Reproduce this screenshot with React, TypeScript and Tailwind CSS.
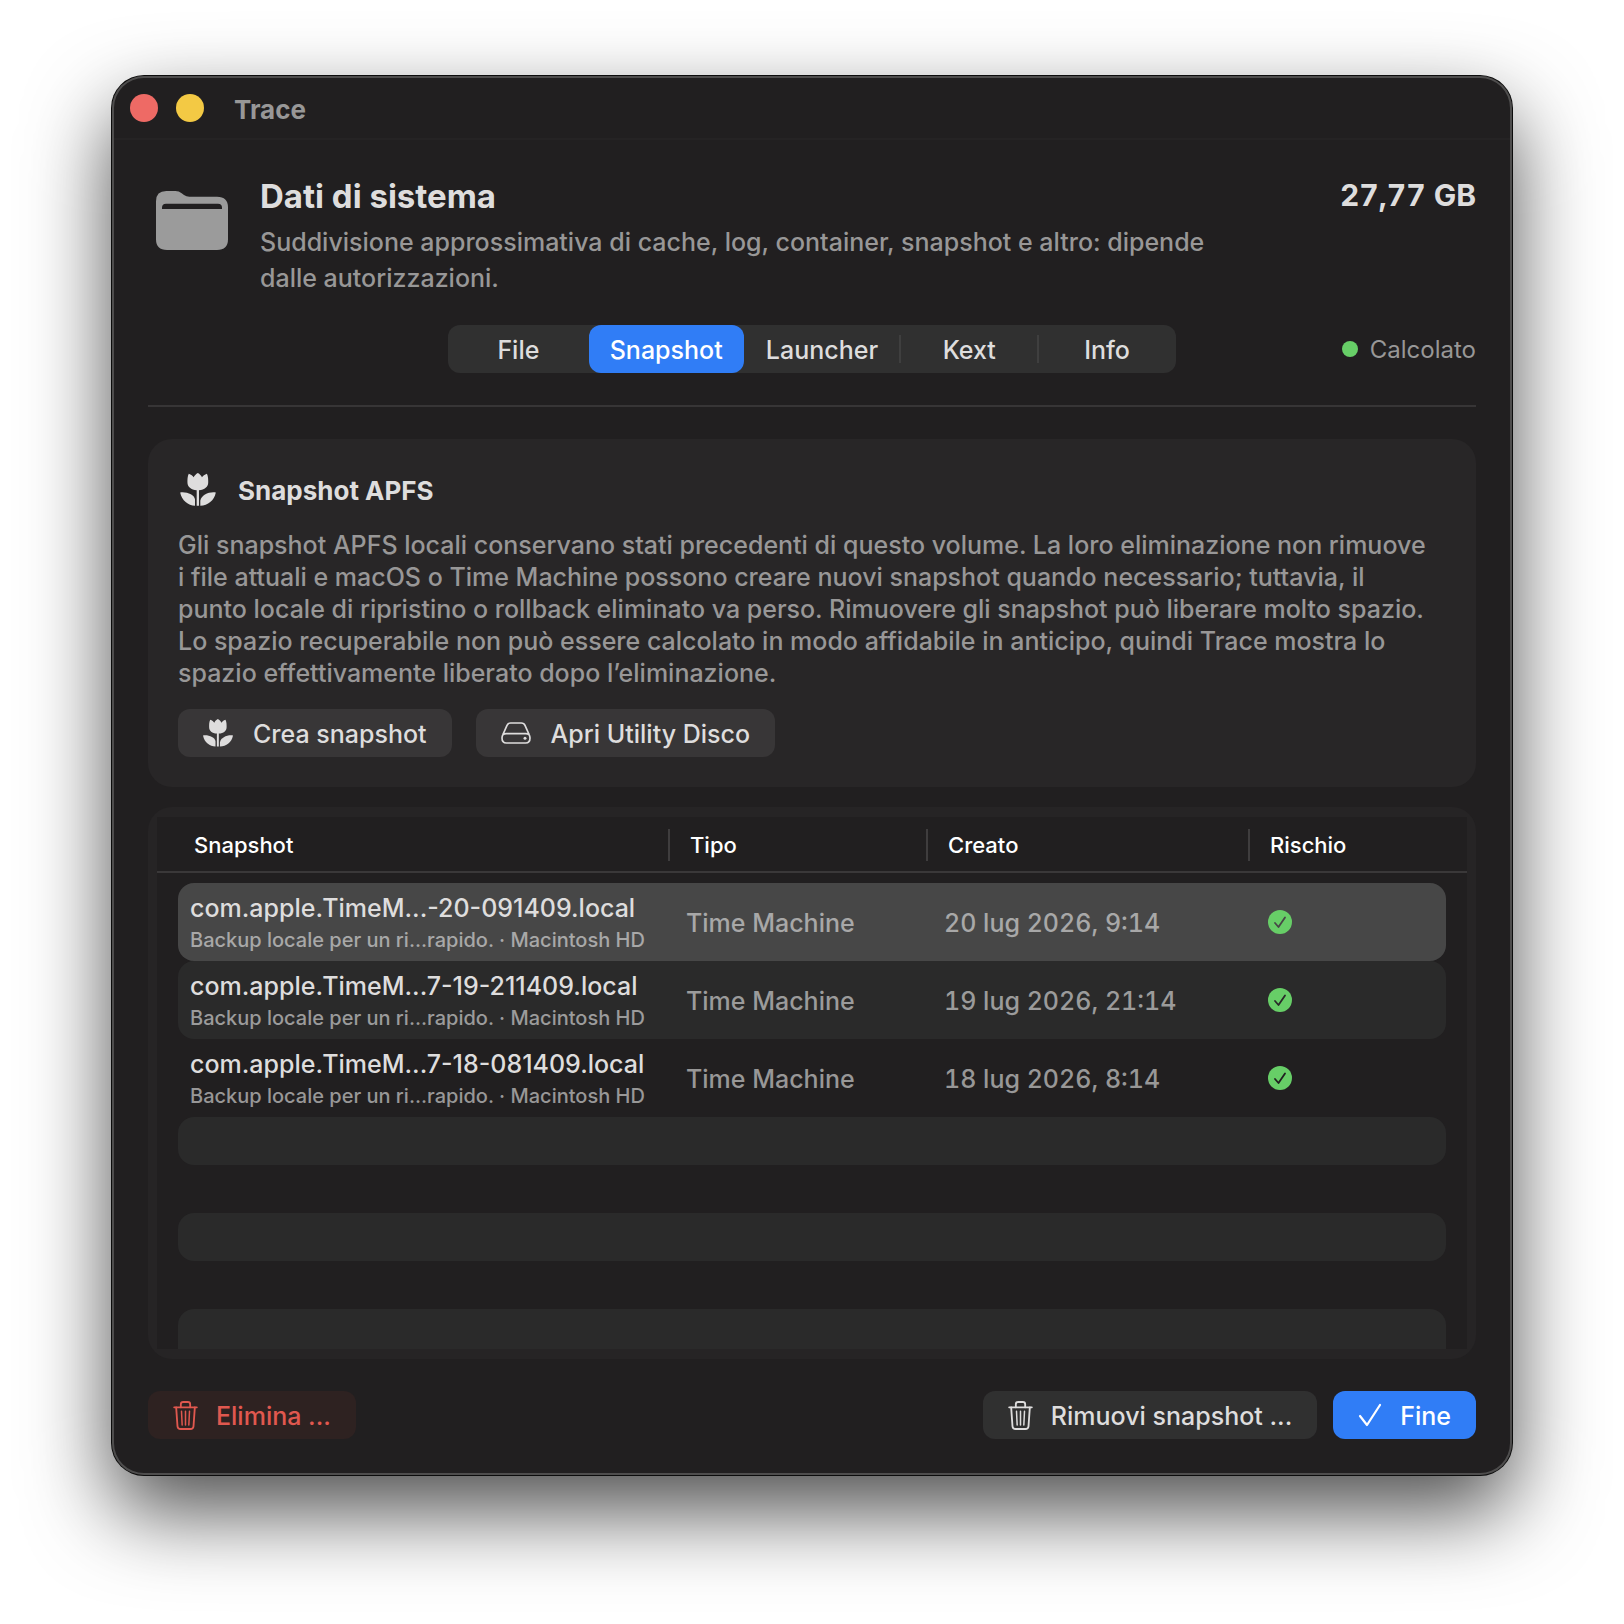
import type { ReactNode } from "react";

const tabs = [
  { label: "File", className: "flex-[141]" },
  { label: "Snapshot", className: "flex-[155]" },
  { label: "Launcher", className: "flex-[157]" },
  { label: "Kext", className: "flex-[138]" },
  { label: "Info", className: "flex-[138]" },
];

const snapshots = [
  { name: "com.apple.TimeM...-20-091409.local", created: "20 lug 2026, 9:14" },
  { name: "com.apple.TimeM...7-19-211409.local", created: "19 lug 2026, 21:14" },
  { name: "com.apple.TimeM...7-18-081409.local", created: "18 lug 2026, 8:14" },
];

// The tick inside the green badge takes the row's background colour
const rowStyles = [
  { row: "bg-[#474747]", muted: "text-[#a8a8a8]", tick: "text-[#474747]" },
  { row: "bg-[#2a2a2a]", muted: "text-[#9b9b9b]", tick: "text-[#2a2a2a]" },
  { row: "", muted: "text-[#989797]", tick: "text-[#211f20]" },
];

function FolderIcon() {
  return (
    <svg viewBox="0 0 216 177" className="h-[59px] w-[72px]" fill="#9b9b9b" aria-hidden="true">
      <path
        fillRule="evenodd"
        d="M0 31Q0 0 31 0H58Q69 0 77 7L84 12Q91 17 100 17H183Q216 17 216 49V145Q216 177 183 177H33Q0 177 0 145ZM18 54H198V50Q198 38 186 38H30Q18 38 18 50Z"
      />
    </svg>
  );
}

function TulipIcon({ className }: { className: string }) {
  return (
    <svg viewBox="0 0 108 100" className={className} fill="currentColor" aria-hidden="true">
      <path d="M26 2C33 4 38 9 41 13C43 8 48 3 53.500 0C59 3 64 8 66 13C69 9 74 4 81 2C85 10 85 20 85 28C85 42 74 51 57 52V99H50V52C33 51 22 42 22 28C22 20 22 10 26 2Z" />
      <path d="M0 59C20 56 43 66 45 80V99C24 98 5 84 0 59Z" />
      <path d="M108 59C88 56 64 66 61 84V99C84 98 103 84 108 59Z" />
    </svg>
  );
}

function DriveIcon() {
  return (
    <svg viewBox="0 0 90 66" className="h-[22px] w-[30px]" fill="none" stroke="currentColor" strokeWidth="5" aria-hidden="true">
      <path d="M29 3H61Q69 3 72 10L84 37Q87 43 87 48Q87 63 74 63H16Q3 63 3 48Q3 43 6 37L18 10Q21 3 29 3Z" />
      <path d="M6 38Q10 35 16 35H74Q80 35 84 38" />
      <circle cx="72" cy="49" r="4.500" fill="currentColor" stroke="none" />
    </svg>
  );
}

function TrashIcon() {
  return (
    <svg viewBox="0 0 74 87" className="h-[29px] w-[25px]" fill="none" stroke="currentColor" strokeWidth="5.500" strokeLinecap="round" aria-hidden="true">
      <path d="M3 19H71" />
      <path d="M23 19V10Q23 3 30 3H44Q51 3 51 10V19" />
      <path d="M9 19L13 76Q14 84 22 84H52Q60 84 61 76L65 19" />
      <path strokeWidth="4.500" d="M25 31L27 72M37 31V72M49 31L47 72" />
    </svg>
  );
}

function CheckIcon() {
  return (
    <svg viewBox="0 0 24 24" className="size-6" fill="none" stroke="currentColor" strokeWidth="2.200" strokeLinecap="round" strokeLinejoin="round" aria-hidden="true">
      <path d="M2 13L9 22L22 2" />
    </svg>
  );
}

function SafeIcon() {
  return (
    <svg viewBox="0 0 24 24" className="size-6" role="img" aria-label="Sicuro">
      <circle cx="12" cy="12" r="12" fill="#67ce67" />
      <path d="M7 13L10.500 17L17 7.500" fill="none" stroke="currentColor" strokeWidth="1.800" strokeLinecap="round" strokeLinejoin="round" />
    </svg>
  );
}

function ActionButton({ icon, className, children }: { icon: ReactNode; className: string; children: ReactNode }) {
  return (
    <button
      type="button"
      className={`flex h-12 items-center rounded-xl px-[25px] whitespace-nowrap ${className}`}
    >
      {icon}
      <span className="pt-[3px]">{children}</span>
    </button>
  );
}

export default function App() {
  return (
    <div className="min-h-screen bg-white px-28 pt-[76px] pb-[148px] font-['Inter','Liberation_Sans',sans-serif] text-[25px] font-medium text-[#dedddd]">
      <main className="rounded-[32px] bg-[#211f20] shadow-[inset_0_0_0_2px_#4e4d4d,0_0_0_1px_#0c0c0c,0_36px_84px_rgba(0,0,0,0.7)]">
        {/* Title bar */}
        <div className="mx-0.5 flex h-16 items-center border-b-2 border-[#252324] pt-0.5 pl-4">
          <button type="button" aria-label="Chiudi" className="size-7 rounded-full bg-[#ee6a65]" />
          <button type="button" aria-label="Riduci" className="ml-[18px] size-7 rounded-full bg-[#f3c944]" />
          <h1 className="ml-[30px] pt-0.5 text-[26px] font-bold text-[#989797]">Trace</h1>
        </div>

        <div className="px-9 pt-[34px] pb-9">
          {/* Header */}
          <header className="flex items-start">
            <div className="mt-[17px] ml-2 shrink-0">
              <FolderIcon />
            </div>
            <div className="ml-8 max-w-[980px] flex-1">
              <h2 className="text-[33px] leading-11 font-bold">Dati di sistema</h2>
              <p className="mt-1.5 leading-9 text-[#989797]">
                Suddivisione approssimativa di cache, log, container, snapshot e altro: dipende dalle autorizzazioni.
              </p>
            </div>
            <p className="ml-auto text-[30px] leading-[42px] font-bold whitespace-nowrap tabular-nums">27,77 GB</p>
          </header>

          {/* Tabs */}
          <div className="mt-[29px] grid grid-cols-[1fr_728px_1fr] items-center">
            <div role="tablist" className="col-start-2 flex h-12 items-center rounded-xl bg-[#303030]">
              {tabs.map((tab, i) => (
                <button
                  key={tab.label}
                  type="button"
                  role="tab"
                  aria-selected={i === 1}
                  className={`relative h-12 pt-[3px] ${tab.className} ${i === 1 ? "rounded-xl bg-[#307df6] text-white" : ""}`}
                >
                  {tab.label}
                  {(i === 2 || i === 3) && <span className="absolute top-2.5 -right-px h-7 w-0.5 bg-[#3f3f3f]" />}
                </button>
              ))}
            </div>
            <p className="flex items-center justify-end gap-3 text-[24px] font-normal text-[#989797]">
              <span className="size-4 rounded-full bg-[#67ce67]" />
              <span className="pt-0.5">Calcolato</span>
            </p>
          </div>

          <hr className="mt-8 border-t-2 border-[#373536]" />

          {/* Snapshot info */}
          <section className="mt-8 rounded-3xl bg-[#282627] p-[30px]">
            <div className="flex h-10 items-center">
              <TulipIcon className="ml-0.5 h-[33px] w-9" />
              <h3 className="ml-[22px] pt-0.5 text-[26px] font-bold">Snapshot APFS</h3>
            </div>
            <p className="mt-5 pr-3 leading-8 text-[#989797]">
              Gli snapshot APFS locali conservano stati precedenti di questo volume. La loro eliminazione non rimuove
              i file attuali e macOS o Time Machine possono creare nuovi snapshot quando necessario; tuttavia, il
              punto locale di ripristino o rollback eliminato va perso. Rimuovere gli snapshot può liberare molto spazio.
              Lo spazio recuperabile non può essere calcolato in modo affidabile in anticipo, quindi Trace mostra lo
              spazio effettivamente liberato dopo l’eliminazione.
            </p>
            <div className="mt-5 flex gap-6">
              <ActionButton icon={<TulipIcon className="h-7 w-[30px]" />} className="gap-5 bg-[#383637]">
                Crea snapshot
              </ActionButton>
              <ActionButton icon={<DriveIcon />} className="gap-5 bg-[#383637]">
                Apri Utility Disco
              </ActionButton>
            </div>
          </section>

          {/* Snapshot list */}
          <section className="mt-5 overflow-hidden rounded-3xl bg-[#262425] px-[9px] py-2.5">
            <div className="bg-[#211f20]">
              <table className="block">
                <thead className="block border-b-2 border-[#3a3839] px-[21px] text-[22px] text-white">
                  <tr className="grid h-[54px] grid-cols-[490fr_258fr_322fr_198fr] items-center pt-0.5 text-left">
                    <th className="pl-4 leading-8 font-medium">Snapshot</th>
                    <th className="border-l-2 border-[#3f3d3e] pl-5 leading-8 font-medium">Tipo</th>
                    <th className="border-l-2 border-[#3f3d3e] pl-5 leading-8 font-medium">Creato</th>
                    <th className="border-l-2 border-[#3f3d3e] pl-5 leading-8 font-medium">Rischio</th>
                  </tr>
                </thead>
                <tbody className="block px-[21px] pt-2.5">
                  {snapshots.map((snapshot, i) => (
                    <tr
                      key={snapshot.name}
                      className={`grid h-[78px] grid-cols-[490fr_258fr_322fr_198fr] items-center rounded-2xl ${rowStyles[i].row} ${rowStyles[i].muted}`}
                    >
                      <td className="pt-[3px] pl-3 whitespace-nowrap">
                        <div className="leading-8 text-[#dedddd]">{snapshot.name}</div>
                        <div className="text-[20px] leading-8">Backup locale per un ri...rapido. · Macintosh HD</div>
                      </td>
                      <td className="pt-[3px] pl-[18px]">Time Machine</td>
                      <td className="pt-[3px] pl-[18px] tabular-nums">{snapshot.created}</td>
                      <td className={`pl-5 ${rowStyles[i].tick}`}>
                        <SafeIcon />
                      </td>
                    </tr>
                  ))}
                </tbody>
              </table>
              {/* Empty striped rows */}
              <div className="flex flex-col gap-12 px-[21px]">
                <div className="h-12 rounded-2xl bg-[#2a2a2a]" />
                <div className="h-12 rounded-2xl bg-[#2a2a2a]" />
                <div className="h-10 rounded-t-2xl bg-[#2a2a2a]" />
              </div>
            </div>
          </section>

          {/* Footer */}
          <footer className="mt-8 flex items-center gap-4">
            <ActionButton icon={<TrashIcon />} className="mr-auto gap-[18px] bg-[#2e2221] text-[#e0584f]">
              Elimina ...
            </ActionButton>
            <ActionButton icon={<TrashIcon />} className="gap-[18px] bg-[#303030]">
              Rimuovi snapshot ...
            </ActionButton>
            <ActionButton icon={<CheckIcon />} className="gap-[18px] bg-[#307df6] text-white">
              Fine
            </ActionButton>
          </footer>
        </div>
      </main>
    </div>
  );
}
